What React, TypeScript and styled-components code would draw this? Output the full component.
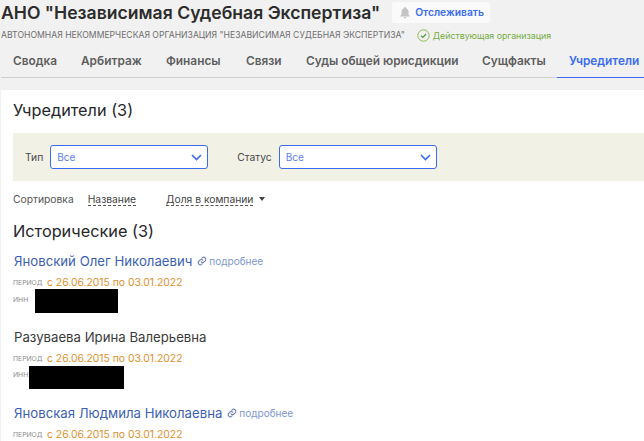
import React from "react";
import styled, { createGlobalStyle } from "styled-components";

const Global = createGlobalStyle`
  html, body { margin: 0; padding: 0; width: 644px; height: 441px; overflow: hidden; background: #f1f1f1; }
  * { box-sizing: border-box; }
  body { font-family: Inter, "Noto Sans", sans-serif; }
`;

const Page = styled.div`
  width: 644px;
  height: 441px;
  overflow: hidden;
  display: flex;
  flex-direction: column;
`;
const Header = styled.header`
  padding: 0 0 0 1px;
`;
const TitleRow = styled.div`
  display: flex;
  align-items: center;
  height: 23px;
  padding-top: 1px;
`;
const Title = styled.h1`
  margin: 0;
  font-size: 17.6px;
  line-height: 21px;
  font-weight: 600;
  color: #2c2c2c;
  white-space: nowrap;
`;
const TrackButton = styled.button`
  margin-left: 12px;
  width: 98px;
  height: 21px;
  border: 0;
  border-radius: 3px;
  background: #fafafa;
  display: flex;
  align-items: center;
  padding: 0 0 0 7px;
  gap: 4px;
  font: 600 10.3px Inter, sans-serif;
  color: #3b6cf0;
  white-space: nowrap;
`;
const SubRow = styled.div`
  display: flex;
  align-items: center;
  height: 20px;
  margin-top: 2px;
`;
const Subtitle = styled.span`
  font-size: 8.65px;
  color: #6f6f6f;
  white-space: nowrap;
`;
const Status = styled.span`
  display: flex;
  align-items: center;
  gap: 3px;
  margin-left: 12px;
  font-size: 8.8px;
  color: #74ad3f;
  white-space: nowrap;
`;
const Tabs = styled.nav`
  display: flex;
  height: 33px;
  border-bottom: 1px solid #cfcfcf;
`;
const Tab = styled.a<{ $active?: boolean; $w: number }>`
  width: ${(p) => p.$w}px;
  flex: none;
  padding: 9px 0 0 12px;
  font-size: 11.85px;
  font-weight: 600;
  color: ${(p) => (p.$active ? "#3b6cf0" : "#5e5e5e")};
  white-space: nowrap;
  height: 33px;
  border-bottom: ${(p) => (p.$active ? "1px solid #3b6cf0" : "none")};
`;
const Panel = styled.main`
  flex: 1;
  margin: 12px 0 0 1px;
  background: #fff;
  padding: 9px 0 0 12px;
`;
const Heading = styled.h2`
  margin: 0;
  font-size: 16.3px;
  line-height: 22px;
  font-weight: 400;
  color: #26262b;
`;
const FilterBar = styled.div`
  margin-top: 12px;
  height: 48px;
  background: #f1f1e6;
  display: flex;
  align-items: center;
  padding-left: 12px;
`;
const FilterLabel = styled.span`
  font-size: 10.3px;
  color: #4a4a4a;
  margin-right: 7px;
`;
const Select = styled.div`
  width: 158px;
  height: 24px;
  border: 1px solid #3b6cf0;
  border-radius: 3px;
  background: #fff;
  display: flex;
  align-items: center;
  justify-content: space-between;
  padding: 0 5px 0 6px;
  font-size: 10px;
  color: #5b7ff0;
  margin-right: 29px;
`;
const SortRow = styled.div`
  display: flex;
  align-items: center;
  height: 16px;
  margin-top: 10px;
  font-size: 10.3px;
  color: #555;
`;
const SortLink = styled.span<{ $gap: number }>`
  margin-left: ${(p) => p.$gap}px;
  color: #444;
  border-bottom: 1px dashed #555;
  line-height: 12px;
`;
const Caret = styled.span`
  margin-left: 6px;
  width: 0;
  height: 0;
  border-left: 3px solid transparent;
  border-right: 3px solid transparent;
  border-top: 4px solid #444;
`;
const SubHeading = styled(Heading)`
  margin-top: 13px;
  margin-bottom: 10px;
`;
const Person = styled.section`
  margin-bottom: 15px;
  padding-left: 1px;
`;
const NameRow = styled.div`
  display: flex;
  align-items: center;
  height: 18px;
  gap: 5px;
`;
const Name = styled.span<{ $link?: boolean }>`
  font-size: 13.2px;
  color: ${(p) => (p.$link ? "#3c5fb4" : "#3a3a3a")};
  white-space: nowrap;
`;
const More = styled.span`
  display: flex;
  align-items: center;
  gap: 2px;
  font-size: 10px;
  color: #7d97cf;
  white-space: nowrap;
`;
const InfoRow = styled.div`
  display: flex;
  align-items: center;
  height: 16px;
  margin-top: 4px;
`;
const Tiny = styled.span`
  font-size: 6.8px;
  color: #8b8b8b;
  text-transform: uppercase;
  width: 34px;
  margin-left: -1px;
`;
const Period = styled.span`
  font-size: 10.35px;
  color: #e08f2c;
  white-space: nowrap;
`;
const InnRow = styled.div`
  display: flex;
  align-items: flex-start;
  height: 24px;
  margin-top: -1px;
`;
const InnLabel = styled.span<{ $top: number }>`
  font-size: 6.8px;
  line-height: 8px;
  color: #8b8b8b;
  margin: ${(p) => p.$top}px 0 0 -1px;
`;
const Redact = styled.div<{ $w: number; $gap: number; $top?: number; $h: number }>`
  width: ${(p) => p.$w}px;
  height: ${(p) => p.$h}px;
  margin-left: ${(p) => p.$gap}px;
  margin-top: ${(p) => p.$top ?? 0}px;
  background: #000;
`;

const Bell = () => (
  <svg width="12" height="13" viewBox="0 0 24 24" fill="#c4c4c4">
    <path d="M12 1a2 2 0 0 0-2 2v.6C6.9 4.5 5 7.3 5 10.5V16l-2.5 3v1h19v-1L19 16v-5.5c0-3.2-1.9-6-5-6.9V3a2 2 0 0 0-2-2zM9.5 21a2.5 2.5 0 0 0 5 0z" />
  </svg>
);
const Check = () => (
  <svg width="13" height="13" viewBox="0 0 13 13" fill="none">
    <circle cx="6.5" cy="6.5" r="5.7" stroke="#8dbb4c" />
    <path d="M4 6.7l1.8 1.7L9 5" stroke="#4f9d3a" strokeWidth="1.2" />
  </svg>
);
const Chevron = () => (
  <svg width="11" height="7" viewBox="0 0 11 7" fill="none">
    <path d="M1 1l4.5 4.5L10 1" stroke="#3b6cf0" strokeWidth="1.6" />
  </svg>
);
const Clip = () => (
  <svg width="10" height="10" viewBox="0 0 24 24" fill="none" stroke="#6a7fb0" strokeWidth="2.6" strokeLinecap="round">
    <path d="M10 14a5 5 0 0 0 7 0l3-3a5 5 0 0 0-7-7l-1.5 1.5" />
    <path d="M14 10a5 5 0 0 0-7 0l-3 3a5 5 0 0 0 7 7l1.5-1.5" />
  </svg>
);

const tabs: [string, number][] = [
  ["Сводка", 68], ["Арбитраж", 85], ["Финансы", 80], ["Связи", 60],
  ["Суды общей юрисдикции", 176], ["Сущфакты", 87],
];

export default function App() {
  return (
    <Page>
      <Global />
      <Header>
        <TitleRow>
          <Title>АНО "Независимая Судебная Экспертиза"</Title>
          <TrackButton><Bell />Отслеживать</TrackButton>
        </TitleRow>
        <SubRow>
          <Subtitle>АВТОНОМНАЯ НЕКОММЕРЧЕСКАЯ ОРГАНИЗАЦИЯ "НЕЗАВИСИМАЯ СУДЕБНАЯ ЭКСПЕРТИЗА"</Subtitle>
          <Status><Check />Действующая организация</Status>
        </SubRow>
        <Tabs>
          {tabs.map(([t, w]) => <Tab key={t} $w={w}>{t}</Tab>)}
          <Tab $active $w={87}>Учредители</Tab>
        </Tabs>
      </Header>
      <Panel>
        <Heading>Учредители (3)</Heading>
        <FilterBar>
          <FilterLabel>Тип</FilterLabel>
          <Select>Все<Chevron /></Select>
          <FilterLabel>Статус</FilterLabel>
          <Select>Все<Chevron /></Select>
        </FilterBar>
        <SortRow>
          Сортировка
          <SortLink $gap={14}>Название</SortLink>
          <SortLink $gap={30}>Доля в компании</SortLink>
          <Caret />
        </SortRow>
        <SubHeading>Исторические (3)</SubHeading>
        <Person>
          <NameRow><Name $link>Яновский Олег Николаевич</Name><More><Clip />подробнее</More></NameRow>
          <InfoRow><Tiny>период</Tiny><Period>с 26.06.2015 по 03.01.2022</Period></InfoRow>
          <InnRow><InnLabel $top={7}>ИНН</InnLabel><Redact $w={83} $gap={7} $h={24} /></InnRow>
        </Person>
        <Person>
          <NameRow><Name>Разуваева Ирина Валерьевна</Name></NameRow>
          <InfoRow><Tiny>период</Tiny><Period>с 26.06.2015 по 03.01.2022</Period></InfoRow>
          <InnRow><InnLabel $top={6}>ИНН</InnLabel><Redact $w={95} $gap={1} $top={1} $h={23} /></InnRow>
        </Person>
        <Person>
          <NameRow><Name $link>Яновская Людмила Николаевна</Name><More><Clip />подробнее</More></NameRow>
          <InfoRow><Tiny>период</Tiny><Period>с 26.06.2015 по 03.01.2022</Period></InfoRow>
        </Person>
      </Panel>
    </Page>
  );
}
